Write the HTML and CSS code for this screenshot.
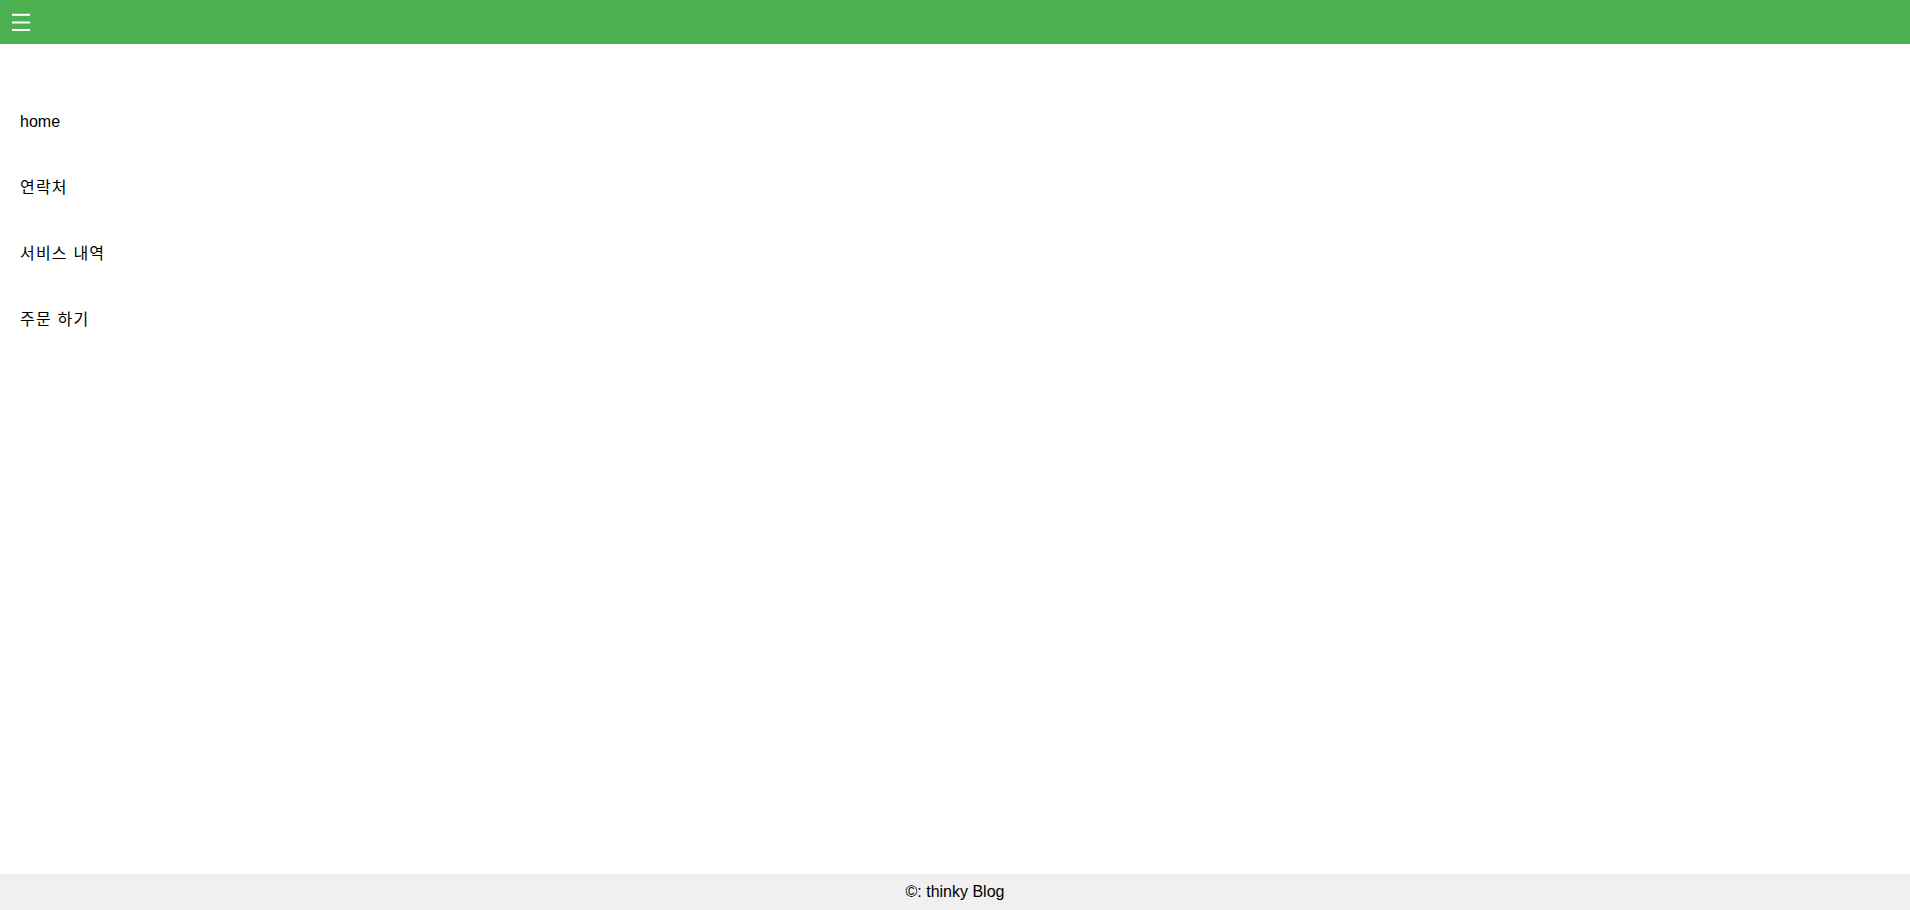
FILE: index.html
```html
<!DOCTYPE html>
<html lang="ko">
<head>
<meta charset="utf-8">
<title>thinky Blog</title>
<link rel="stylesheet" href="styles.css">
</head>
<body>
<div class="page">
  <header class="topbar">
    <button class="menu-btn" aria-label="menu">
      <svg width="18" height="18" viewBox="0 0 18 18">
        <rect x="0" y="0.8" width="18" height="2" fill="#fff"/>
        <rect x="0" y="8.5" width="18" height="2" fill="#fff"/>
        <rect x="0" y="16" width="18" height="2" fill="#fff"/>
      </svg>
    </button>
  </header>
  <nav class="sidenav">
    <a class="nav-link" href="#">home</a>
    <a class="nav-link ko" href="#">연락처</a>
    <a class="nav-link ko" href="#">서비스 내역</a>
    <a class="nav-link ko" href="#">주문 하기</a>
  </nav>
  <footer class="footer">©: thinky Blog</footer>
</div>
</body>
</html>
```

FILE: styles.css
```css
html, body {
  margin: 0;
  padding: 0;
}
body {
  font-family: "Liberation Sans", "Noto Sans CJK KR", sans-serif;
  font-size: 16px;
  line-height: 18px;
  color: #000;
  background: #fff;
}
.page {
  display: flex;
  flex-direction: column;
  min-height: 100vh;
}
.topbar {
  height: 44px;
  background: #4caf50;
  display: flex;
  align-items: center;
  padding-left: 12px;
  box-sizing: border-box;
}
.menu-btn {
  background: none;
  border: 0;
  padding: 0;
  margin: 0;
  width: 18px;
  height: 18px;
  display: block;
  cursor: pointer;
}
.menu-btn svg {
  display: block;
}
.sidenav {
  display: flex;
  flex-direction: column;
  align-items: flex-start;
  padding-top: 45px;
}
.nav-link {
  display: block;
  padding: 24px 20px;
  color: #000;
  text-decoration: none;
}
.nav-link.ko {
  letter-spacing: 1.2px;
}
.footer {
  margin-top: auto;
  background: #f0f0f0;
  text-align: center;
  padding: 9px 0;
  height: 36px;
  box-sizing: border-box;
}
```
